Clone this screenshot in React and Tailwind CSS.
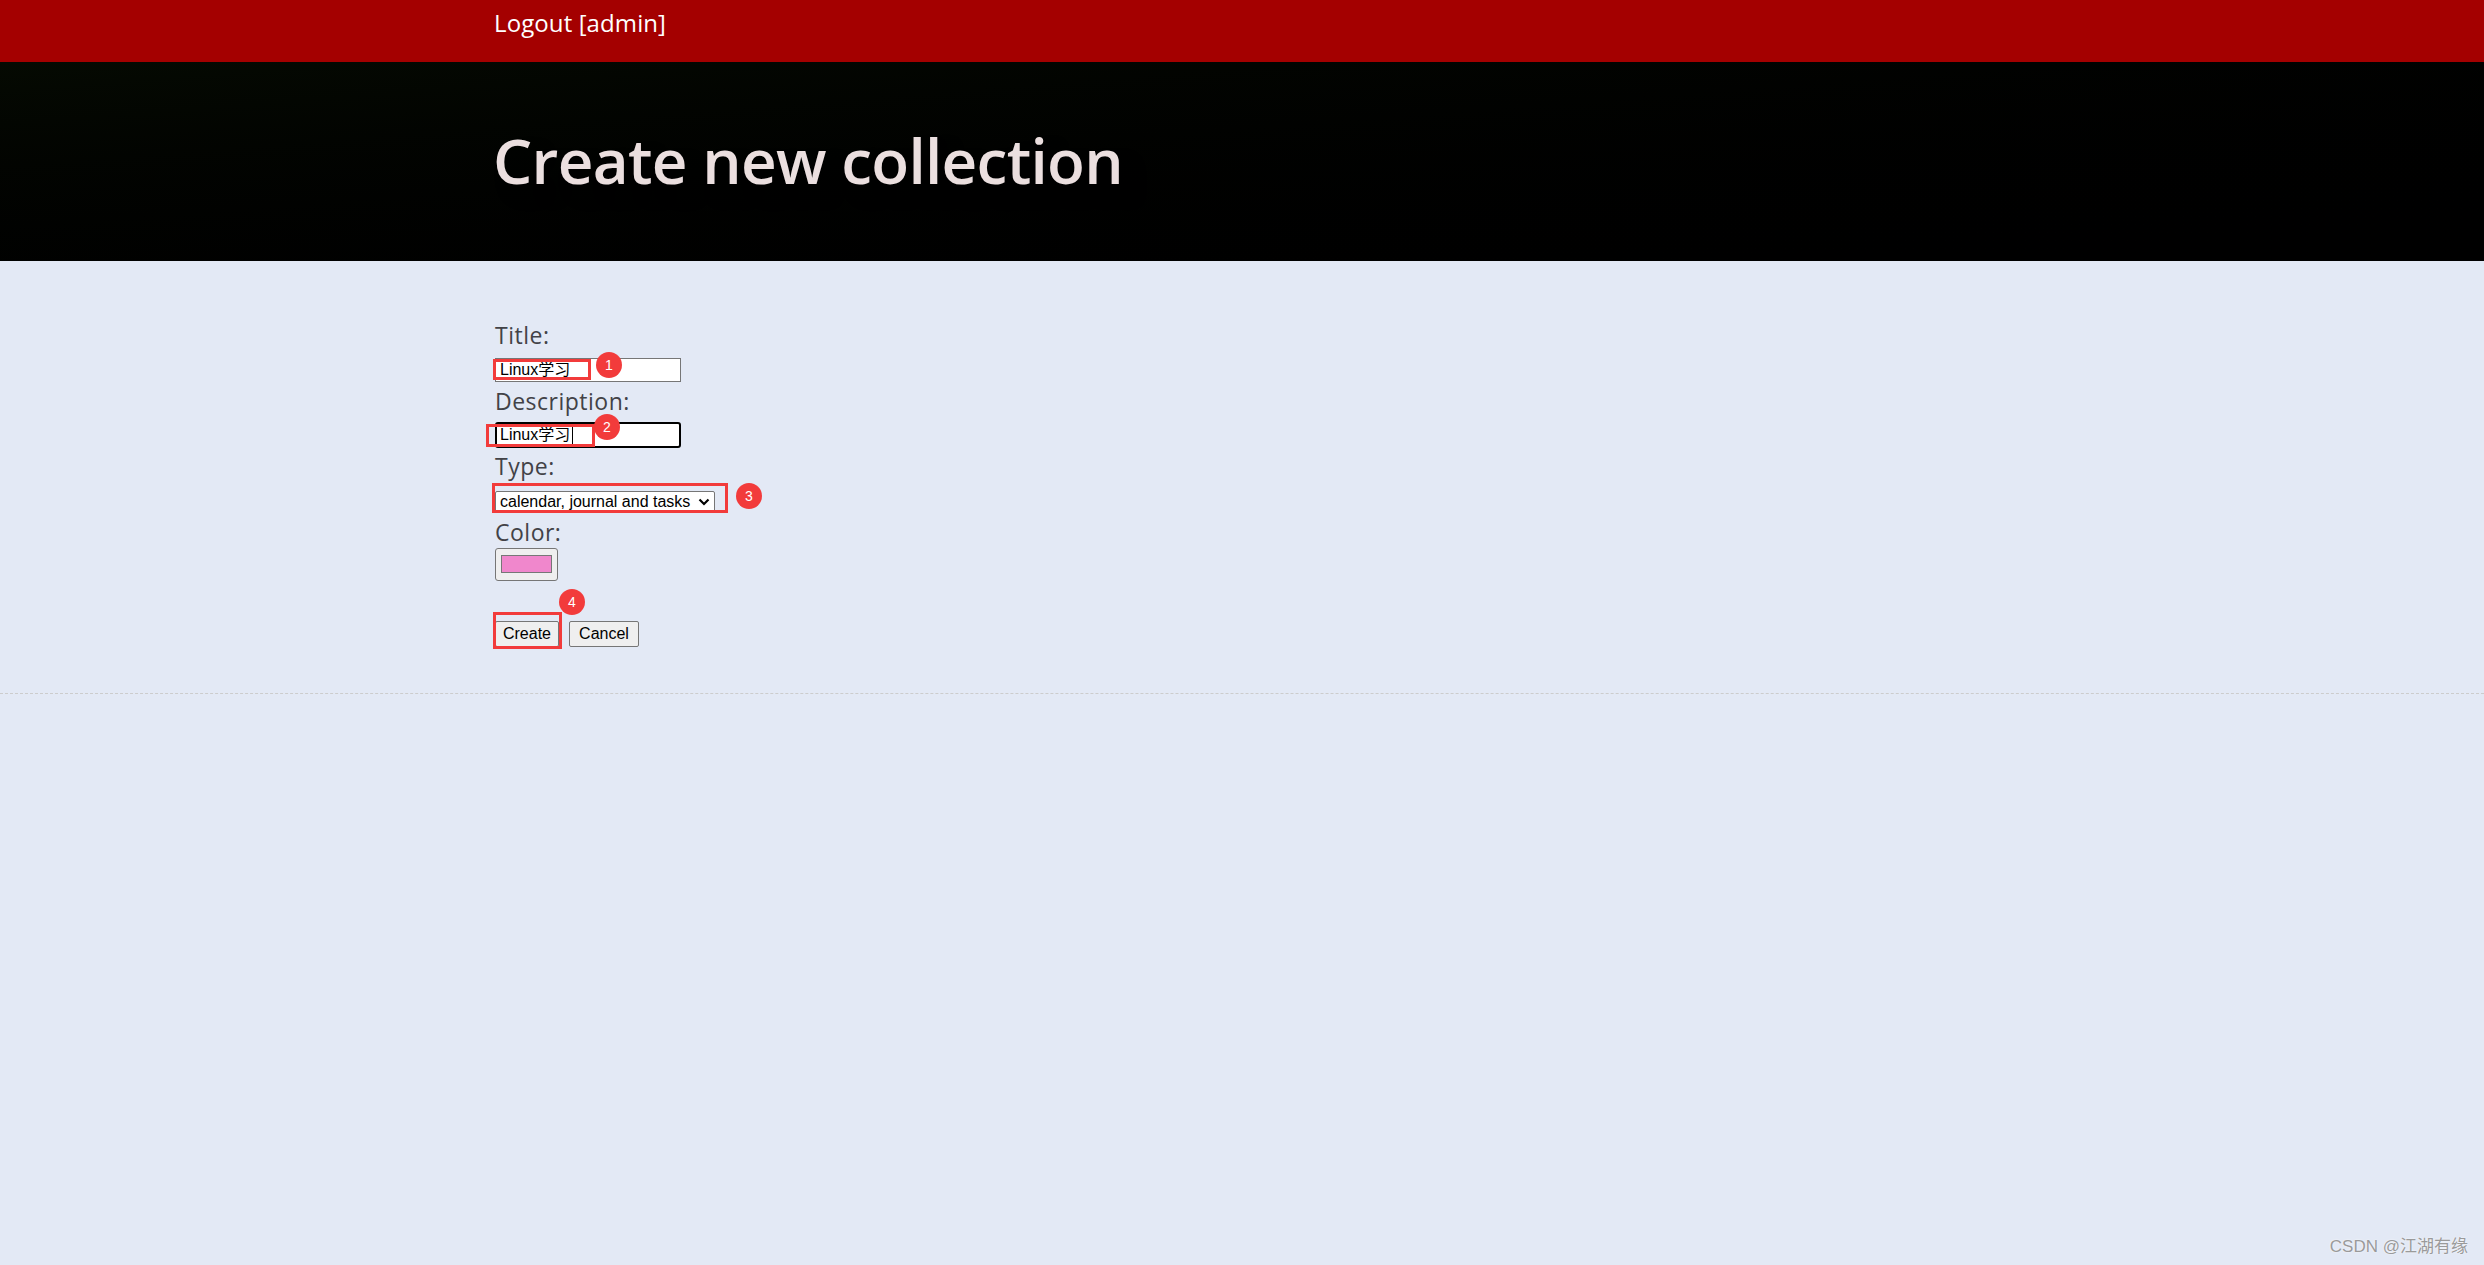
import React from "react";

const labelCls =
  "h-[28px] leading-[28px] pt-[1px] text-[23px] tracking-[0.5px] text-[#424247] [font-family:'Open_Sans',sans-serif]";
const ctrlFont = "[font-family:'Liberation_Sans','Noto_Sans_CJK_SC',sans-serif]";

function Badge({ n, className }) {
  return (
    <div
      className={
        "absolute w-[26px] h-[26px] rounded-full bg-[#f23b3b] text-white flex items-center justify-center text-[14px] leading-none " +
        ctrlFont +
        " " +
        className
      }
    >
      {n}
    </div>
  );
}

function Mark({ className }) {
  return <div className={"absolute border-[3px] border-[#f23b3b] " + className} />;
}

export default function App() {
  return (
    <div className="relative min-h-[1265px] bg-[#e3e9f5] flex flex-col">
      <nav className="h-[62px] bg-[#a40000] text-white pl-[494px] pt-[9px]">
        <a className="block h-[28px] leading-[28px] text-[24px] tracking-[0.1px] [font-family:'Open_Sans',sans-serif] no-underline">
          Logout [admin]
        </a>
      </nav>

      <header className="h-[199px] bg-linear-to-br from-[#050a02] to-black pl-[493px] pt-[67px]">
        <h1 className="m-0 text-[62px] leading-[62px] font-semibold tracking-[-0.7px] text-[#ebdfdf] [font-family:'Open_Sans',sans-serif] [text-shadow:0.2em_0.2em_0.2em_rgba(0,0,0,0.5)]">
          Create new collection
        </h1>
      </header>

      <section className="relative pl-[495px] pt-[59px] pb-[46px] border-b border-dashed border-[#cccccc]">
        <div className={labelCls}>Title:</div>
        <div
          className={
            "mt-[10px] h-[24px] w-[186px] bg-white border border-[#767676] flex items-center pl-[4px] text-[16px] text-black " +
            ctrlFont
          }
        >
          Linux学习
        </div>

        <div className={"mt-[4px] " + labelCls}>Description:</div>
        <div
          className={
            "mt-[8px] h-[26px] w-[186px] bg-white border-2 border-black rounded-[3px] flex items-center pl-[3px] text-[16px] text-black " +
            ctrlFont
          }
        >
          <span>Linux学习</span>
          <span className="ml-[2px] w-px h-[17px] bg-black" />
        </div>

        <div className={"mt-[3px] " + labelCls}>Type:</div>
        <div
          className={
            "mt-[12px] h-[21px] w-[220px] bg-white border border-[#767676] rounded-[2px] flex items-center justify-between pl-[4px] pr-[4px] text-[16px] text-black " +
            ctrlFont
          }
        >
          <span className="whitespace-nowrap">calendar, journal and tasks</span>
          <svg width="12" height="8" viewBox="0 0 12 8" className="shrink-0">
            <path d="M1.5 1.5 L6 6 L10.5 1.5" fill="none" stroke="black" strokeWidth="2.2" />
          </svg>
        </div>

        <div className={"mt-[5px] " + labelCls}>Color:</div>
        <div className="mt-[3px] w-[63px] h-[33px] bg-[#efefef] border border-[#767676] rounded-[3px] pl-[5px] pt-[6px]">
          <div className="w-[51px] h-[18px] bg-[#f087cc] border border-[#777777]" />
        </div>

        <div className={"mt-[40px] flex gap-[10px] text-[16px] text-black " + ctrlFont}>
          <button className="w-[64px] h-[26px] bg-[#efefef] border border-[#767676] rounded-[2px] flex items-center justify-center">
            Create
          </button>
          <button className="w-[70px] h-[26px] bg-[#efefef] border border-[#767676] rounded-[2px] flex items-center justify-center">
            Cancel
          </button>
        </div>

        {/* annotation overlays */}
        <Mark className="left-[493px] top-[98px] w-[98px] h-[21px]" />
        <Mark className="left-[486px] top-[163px] w-[109px] h-[23px]" />
        <Mark className="left-[492px] top-[222px] w-[236px] h-[30px]" />
        <Mark className="left-[493px] top-[351px] w-[69px] h-[37px]" />
        <Badge n="1" className="left-[596px] top-[91px]" />
        <Badge n="2" className="left-[594px] top-[153px]" />
        <Badge n="3" className="left-[736px] top-[222px]" />
        <Badge n="4" className="left-[559px] top-[328px]" />
      </section>

      <div className="flex-1" />

      <div
        className={
          "absolute right-[16px] bottom-[8px] h-[20px] leading-[20px] text-[17px] text-[#9a9a9a] [text-shadow:0_0_2px_#ffffff] " +
          ctrlFont
        }
      >
        CSDN @江湖有缘
      </div>
    </div>
  );
}
